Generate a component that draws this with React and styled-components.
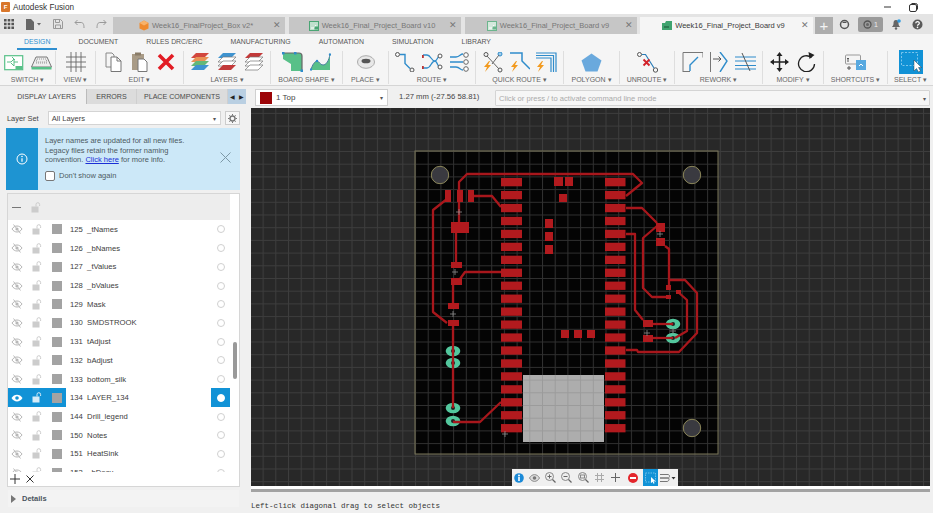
import React from "react";
import styled, { createGlobalStyle } from "styled-components";

const Global = createGlobalStyle`
  html, body { margin: 0; padding: 0; background: #f0f0f0; overflow: hidden; }
  * { box-sizing: border-box; }
  #root { width: 933px; height: 513px; }
`;
const FONT = `"Liberation Sans", Arial, sans-serif`;

const Page = styled.div`
  width: 933px; height: 513px; display: flex; flex-direction: column;
  font-family: ${FONT}; color: #444; background: #f0f0f0; overflow: hidden;
`;
const TitleBar = styled.div`
  height: 14px; background: #fff; display: flex; align-items: center;
  padding-left: 1px; font-size: 8.2px; color: #333; flex: none;
`;
const AppBadge = styled.span`
  width: 9px; height: 10px; background: #d9772b; color: #fff; font-size: 6px; font-weight: bold;
  display: flex; align-items: center; justify-content: center; margin-right: 3px; border-radius: 1px;
`;
const WinCtl = styled.div`
  margin-left: auto; display: flex; gap: 17px; align-items: center; padding-right: 15px;
`;
const TabBar = styled.div`
  height: 20px; background: #e4e4e4; display: flex; align-items: flex-end; flex: none; position: relative;
`;
const QuickTools = styled.div`
  width: 113px; height: 20px; display: flex; align-items: center; gap: 11px; padding-left: 4px; flex: none;
`;
const DocTab = styled.div`
  width: ${p => p.$w}px; height: 17px; margin-right: ${p => p.$mr ?? 4}px; flex: none;
  background: ${p => (p.$active ? "#f5f5f5" : "#c6c6c6")};
  color: ${p => (p.$active ? "#3a3a3a" : "#777")};
  font-size: 7.5px; display: flex; align-items: center; justify-content: center; gap: 3px; position: relative;
  padding-right: 6px;
`;
const TabClose = styled.span`
  position: absolute; right: 4px; top: 3px; font-size: 9px; color: #777; line-height: 10px;
`;
const PlusTab = styled.div`
  width: 18px; height: 17px; background: #adadad; color: #f3f3f3; font-size: 15px; margin-right: 6px;
  display: flex; align-items: center; justify-content: center; flex: none;
`;
const RightTools = styled.div`
  display: flex; align-items: center; height: 20px; gap: 8px;
`;
const JobPill = styled.div`
  width: 25px; height: 15px; background: #9b9b9b; border-radius: 2px; color: #eee; font-size: 7px;
  display: flex; align-items: center; justify-content: center; gap: 2px;
`;
const HelpSlot = styled.span`
  margin-left: 3px; line-height: 0;
`;
const RibbonTabs = styled.div`
  height: 16px; background: #f5f5f5; display: flex; gap: 28px; padding-left: 24px; font-size: 6.9px; color: #555; flex: none;
`;
const RibbonTab = styled.div`
  height: 15px; display: flex; align-items: center; position: relative; white-space: nowrap;
  color: ${p => (p.$active ? "#2f8fd0" : "#555")};
  ${p => p.$active && `&::after { content: ""; position: absolute; left: -7px; right: -7px; bottom: -1px; height: 2px; background: #2f8fd0; }`}
`;
const Ribbon = styled.div`
  height: 36px; background: #f5f5f5; display: flex; border-bottom: 1px solid #d5d5d5; flex: none;
`;
const Group = styled.div`
  width: ${p => p.$w}px; flex: none; height: 33px; margin-top: 1px; display: flex; flex-direction: column; align-items: center;
  justify-content: space-between; border-right: ${p => (p.$last ? "none" : "1px solid #dedede")};
`;
const GroupIcons = styled.div`
  display: flex; height: 22px; align-items: center; justify-content: center; gap: ${p => p.$gap ?? 6}px;
`;
const GroupLabel = styled.div`
  font-size: 7px; color: #666; line-height: 9px; white-space: nowrap;
`;
const SubBar = styled.div`
  height: 22px; display: flex; background: #f0f0f0; flex: none;
`;
const PanelTabs = styled.div`
  width: 251px; flex: none; display: flex; padding: 3px 0 0 7px; font-size: 7.1px; flex-shrink: 0;
`;
const PanelTab = styled.div`
  width: ${p => p.$w}px; height: 15px; display: flex; align-items: center; justify-content: center;
  background: ${p => (p.$active ? "#f0f0f0" : "#dcdcdc")}; color: #4a4a4a; white-space: nowrap;
  border-right: 1px solid ${p => (p.$active ? "#bbb" : "#cfcfcf")};
`;
const Arrows = styled.div`
  width: 18px; height: 15px; background: #b9cfe2; display: flex; align-items: center; justify-content: space-around; font-size: 6px; color: #222;
`;
const ComboBox = styled.div`
  margin: 3px 0 0 4px; width: 133px; height: 17px; background: #fff; border: 1px solid #d0d0d0;
  display: flex; align-items: center; padding: 0 4px; font-size: 8px; color: #444;
`;
const Swatch = styled.span`
  width: 12px; height: 12px; background: #9c0508; margin-right: 4px; flex: none;
`;
const Caret = styled.span`
  margin-left: auto; font-size: 6px; color: #555;
`;
const Coords = styled.div`
  width: 96px; margin-left: 11px; line-height: 22px; font-size: 7.7px; color: #444; white-space: nowrap; flex: none;
`;
const CommandBox = styled.div`
  margin-top: 4px; width: 435px; height: 16px; background: #f6f6f6; border: 1px solid #d4d4d4; border-radius: 1px;
  display: flex; align-items: center; padding: 0 3px; font-size: 7.6px; color: #aaa;
`;
const Main = styled.div`
  flex: 1; display: flex; min-height: 0;
`;
const Side = styled.div`
  width: 251px; flex: none; display: flex; flex-direction: column;
`;
const LayerSetRow = styled.div`
  height: 20px; display: flex; align-items: center; padding-left: 7px; font-size: 7.4px; flex: none;
`;
const SetSelect = styled.div`
  margin-left: 9px; width: 173px; height: 14px; background: #fff; border: 1px solid #d4d4d4;
  display: flex; align-items: center; padding: 0 4px 0 3px; font-size: 7.6px; color: #444;
`;
const GearBtn = styled.div`
  margin-left: 4px; width: 15px; height: 14px; background: #f7f7f7; border: 1px solid #ccc; display: flex; align-items: center; justify-content: center;
`;
const InfoBox = styled.div`
  margin-left: 6px; width: 234px; height: 62px; background: #cce8f8; display: flex; flex: none;
`;
const InfoSide = styled.div`
  width: 32px; background: #1e94d2; display: flex; align-items: center; justify-content: center; flex: none;
`;
const InfoBody = styled.div`
  flex: 1; padding: 8px 0 0 7px; font-size: 7.5px; line-height: 9.6px; color: #4d5a62; position: relative;
`;
const InfoLink = styled.a`
  color: #1b2fd6; text-decoration: underline;
`;
const CheckRow = styled.div`
  display: flex; align-items: center; gap: 4px; margin-top: 6px;
`;
const CheckBox = styled.span`
  width: 10px; height: 10px; background: #fff; border: 1px solid #777; border-radius: 2px; flex: none;
`;
const InfoClose = styled.div`
  position: absolute; right: 9px; top: 24px; line-height: 0;
`;
const List = styled.div`
  margin: 3px 0 0 7px; width: 233px; height: 294px; flex: none; background: #fff; border: 1px solid #d6d6d6;
  display: flex; flex-direction: column; position: relative;
`;
const ListBody = styled.div`
  flex: 1; min-height: 0; overflow: hidden;
`;
const ListHead = styled.div`
  height: 26px; width: 222px; background: #ededed; display: flex; align-items: center; padding-left: 3px; gap: 9px;
`;
const Dash = styled.span`
  width: 9px; height: 1px; background: #777; margin: 0 1px 0 1px;
`;
const Row = styled.div`
  height: 18.72px; width: 222px; display: flex; align-items: center; font-size: 7.7px; color: #3d3d3d;
`;
const RowIcons = styled.div`
  width: 58px; height: 100%; display: flex; align-items: center; padding-left: 3px; gap: 9px; flex: none;
  background: ${p => (p.$on ? "#1192d6" : "transparent")};
`;
const LayerChip = styled.span`
  width: 10px; height: 10px; background: #a3a3a3; flex: none; margin-left: 1px;
`;
const LayerName = styled.div`
  flex: 1; padding-left: 4px; white-space: pre;
`;
const RadioCell = styled.div`
  width: 19px; height: 100%; display: flex; align-items: center; justify-content: center; flex: none;
  background: ${p => (p.$on ? "#1192d6" : "transparent")};
`;
const Radio = styled.span`
  width: 8px; height: 8px; border-radius: 50%;
  background: ${p => (p.$on ? "#fff" : "transparent")};
  border: 1px solid ${p => (p.$on ? "#fff" : "#d0d0d0")};
`;
const ScrollThumb = styled.div`
  position: absolute; left: 225px; top: 148px; width: 4px; height: 37px; background: #999; border-radius: 2px;
`;
const ListFoot = styled.div`
  height: 14px; flex: none; display: flex; align-items: center; padding-left: 2px; gap: 6px; background: #fff;
`;
const Details = styled.div`
  margin: 3px 0 0 8px; width: 231px; height: 17px; background: #f3f3f3; display: flex; align-items: center; padding-left: 3px; gap: 6px;
  font-size: 7.5px; font-weight: bold; color: #4a5560;
`;
const Tri = styled.span`
  width: 0; height: 0; border-left: 5px solid #777; border-top: 4px solid transparent; border-bottom: 4px solid transparent;
`;
const Right = styled.div`
  width: 682px; flex: none; display: flex; flex-direction: column;
`;
const Canvas = styled.div`
  width: 679px; height: 378px; position: relative; background: #282828; line-height: 0; flex: none;
`;
const CanvasGap = styled.div`
  height: 3px; width: 679px; background: #fff; flex: none;
`;
const StatusRule = styled.div`
  height: 3px; width: 679px; background: #a3a3a3; flex: none;
`;
const Status = styled.div`
  padding: 9px 0 0 0; font-family: "Liberation Mono", monospace; font-size: 7.5px; line-height: 10px; color: #333; white-space: pre;
`;
const MiniBar = styled.div`
  position: absolute; left: 261px; top: 361px; width: 166px; height: 17px; background: #f0f0f0;
  display: flex; align-items: center;
`;
const MiniBtn = styled.div`
  width: ${p => p.$w ?? 16.3}px; height: 17px; display: flex; align-items: center; justify-content: center; flex: none;
  background: ${p => (p.$on ? "#1192d6" : "transparent")};
`;

/* ---------- icons ---------- */
const Ic = ({ w = 20, h = 20, vb, children }) => (
  <svg width={w} height={h} viewBox={vb || `0 0 ${w} ${h}`} fill="none">{children}</svg>
);
const G = "#58c088", B = "#2f8ccb";

const I = {
  apps: <Ic w={10} h={10}><path d="M0 0h2.6v2.6H0zM3.7 0h2.6v2.6H3.7zM7.4 0H10v2.6H7.4zM0 3.7h2.6v2.6H0zM3.7 3.7h2.6v2.6H3.7zM7.4 3.7H10v2.6H7.4zM0 7.4h2.6V10H0zM3.7 7.4h2.6V10H3.7zM7.4 7.4H10V10H7.4z" fill="#555" /></Ic>,
  file: <Ic w={17} h={11}><path d="M1 0h5l3 3v8H1z" fill="#666" /><path d="M12 4h4l-2 2.5z" fill="#666" /></Ic>,
  save: <Ic w={10} h={10}><path d="M.5.5h7l2 2v7h-9z" stroke="#999" /><path d="M2.5 1v2.5h4V1M2.5 9V6h5v3" stroke="#999" /></Ic>,
  undo: <Ic w={11} h={10}><path d="M3.5 1 1 3.5 3.5 6M1 3.5h6c2 0 3 1.500 3 5.500" stroke="#999" /></Ic>,
  redo: <Ic w={11} h={10}><path d="M7.500 1 10 3.500 7.500 6M10 3.500H4c-2 0-3 1.500-3 5.500" stroke="#999" /></Ic>,
  box: <Ic w={10} h={11}><path d="M5 .5 9.500 3v5.500L5 10.500.5 8.500V3z" fill="#ef8a2d" /><path d="M5 .5 9.500 3 5 5.500.5 3z" fill="#f7b26a" /></Ic>,
  pcb: (c1, c2) => <Ic w={10} h={10}><rect x=".5" y=".5" width="9" height="9" fill={c2} stroke={c1} /><path d="M2 7h3l2-3M6 7h2" stroke="#fff" /><rect x="5.500" y="5.500" width="3.500" height="3" fill={c1} /></Ic>,
  pcbDark: <Ic w={10} h={9}><path d="M0 2h3l1-2h6v9H0z" fill="#3fa36f" /><rect x="2" y="5" width="5" height="2" fill="#2b7a52" /></Ic>,
  globe: <Ic w={11} h={11}><circle cx="5.500" cy="5.500" r="4" stroke="#555" strokeWidth="1.500" /><path d="M3 4a3 3 0 0 1 5 0z" fill="#555" /></Ic>,
  job: <Ic w={9} h={9}><circle cx="4.500" cy="4.500" r="3.500" stroke="#555" strokeWidth="1.300" /><circle cx="4.500" cy="4.500" r="1.500" fill="#666" /></Ic>,
  bell: <Ic w={10} h={11}><path d="M5 1c2 0 2.500 1.500 2.500 3.500 0 2 1 2.500 1.500 3.500H1c.5-1 1.500-1.500 1.500-3.500S3 1 5 1z" fill="#666" /><circle cx="5" cy="9.500" r="1.200" fill="#666" /><circle cx="8" cy="2" r="1.800" fill="#2f9be0" /></Ic>,
  help: <Ic w={11} h={11}><circle cx="5.500" cy="5.500" r="5" fill="#5a5a5a" /><path d="M3.700 4.200c.2-2 3.600-2 3.600 0 0 1.300-1.800 1.300-1.800 2.500" stroke="#fff" strokeWidth="1.200" /><circle cx="5.500" cy="8.400" r=".8" fill="#fff" /></Ic>,
  min: <Ic w={10} h={10}><path d="M2 5h7" stroke="#333" /></Ic>,
  restore: <Ic w={9} h={9}><rect x=".5" y="1.500" width="7" height="7" rx="1.500" stroke="#333" /><path d="M2.500 .5h4a2 2 0 0 1 2 2v4" stroke="#333" /></Ic>,

  schem: <Ic w={20} h={17}><rect x=".7" y="1.700" width="18" height="14" stroke={G} strokeWidth="1.200" fill="#fff" /><path d="M3 8h4l3-3v7l-3-3M10 8h4M8 3l3 3" stroke={G} /><rect x="11.500" y="12" width="7" height="3.500" fill={G} /></Ic>,
  pcb3d: <Ic w={21} h={15}><path d="M5 2h11l4.500 10H.5z" fill="#eee" stroke="#777" /><path d="M6 4h9l1 3H5zM5 8h11" stroke="#999" strokeDasharray="1 1" /><path d="M.5 12h20v2.500H.5z" fill={G} /></Ic>,
  grid: <Ic w={20} h={20}><path d="M5 0v20M10 0v20M15 0v20M0 5h20M0 10h20M0 15h20" stroke="#666" strokeWidth=".9" /></Ic>,
  copy: <Ic w={17} h={20}><path d="M1 1h6l2 2v12H1z" stroke="#888" fill="#f5f5f5" /><path d="M6 5h6l4 4v10.500H6z" stroke="#777" fill="#fff" /><path d="M12 5v4h4" stroke="#777" /></Ic>,
  paste: <Ic w={17} h={20}><rect x="1" y="2" width="12" height="16" fill="#a99b86" /><rect x="4" y=".5" width="6" height="3" fill="#8a7c68" /><path d="M7 7h6l3 3v9.500H7z" stroke="#777" fill="#fff" /></Ic>,
  cross: <Ic w={18} h={18}><path d="M2 2l14 14M16 2 2 16" stroke="#e21c24" strokeWidth="3.600" /></Ic>,
  layers: cols => <Ic w={18} h={20}>{cols.map((c, i) => <path key={i} d={`M5 ${1 + i * 4}h13l-5 5H0z`} fill={c} stroke={c === "#fff" ? "#777" : "none"} strokeWidth=".7" />)}</Ic>,
  shape: <Ic w={21} h={20}><path d="M1 1h16a3 3 0 0 1 3 3v15H9V12L1 7z" fill={G} /><path d="M1 1h16a3 3 0 0 1 3 3v15" stroke="#666" strokeWidth="1.200" /><rect x="0" y="0" width="2.500" height="2.500" fill={B} /><rect x="12" y="0" width="2.500" height="2.500" fill={B} /><rect x="18.500" y="17.500" width="2.500" height="2.500" fill={B} /></Ic>,
  curve: <Ic w={21} h={18}><path d="M1 17c1-5 4-9 6-9s3 4 6 4 6-4 7-11v16z" fill={G} /><path d="M1 17c1-5 4-9 6-9s3 4 6 4 6-4 7-11" stroke="#4a7f9f" /><circle cx="7" cy="8" r="1.200" fill={B} /><circle cx="20" cy="1.500" r="1.200" fill={B} /><circle cx="1" cy="16.500" r="1.200" fill={B} /></Ic>,
  ring: <Ic w={18} h={14}><ellipse cx="9" cy="7" rx="8.500" ry="6.300" fill="#e8e8e8" stroke="#aaa" /><ellipse cx="9" cy="6" rx="4.500" ry="2.300" fill="#555" /></Ic>,
  route: <Ic w={20} h={20}><circle cx="2.500" cy="2.500" r="2" stroke="#555" /><path d="M5 2.500h5v9l5 5" stroke={B} strokeWidth="1.400" /><circle cx="17" cy="18" r="2" stroke="#555" /></Ic>,
  fan: <Ic w={21} h={20}><path d="M1 3h4c4 0 4 6 8 6 2 0 3-5 5-6M1 16h4c4 0 4-7 8-7 2 0 3 6 5 7" stroke={B} strokeWidth="1.300" /><circle cx="18" cy="4" r="2" fill="#fff" stroke="#555" /><circle cx="18" cy="15" r="2" fill="#fff" stroke="#555" /><rect y="3" width="1.800" height="3" fill="#b33" /><rect y="14" width="1.800" height="3" fill="#b33" /></Ic>,
  bus: <Ic w={20} h={20}><path d="M0 5h6c4 0 4-3 7-3M0 10h13M0 15h6c4 0 4 3 7 3" stroke={B} strokeWidth="1.300" /><circle cx="16" cy="3" r="2.300" fill="#fff" stroke="#666" /><circle cx="16" cy="10" r="2.300" fill="#fff" stroke="#666" /><circle cx="16" cy="17" r="2.300" fill="#fff" stroke="#666" /></Ic>,
  qAir: <Ic w={21} h={21}><circle cx="3" cy="2.500" r="2" stroke="#555" /><circle cx="17" cy="2" r="2" fill="#9fcdec" stroke={B} /><circle cx="17" cy="18" r="2" stroke="#555" /><path d="M4 4l12 13M16 3l-7 9" stroke="#666" /><path d="M6 9 1 15h3l-2 5 6-7H5l2-4z" fill="#f29a1f" /></Ic>,
  qRoute: <Ic w={20} h={21}><path d="M0 1h12v8l8 8" stroke={B} strokeWidth="1.500" /><path d="M6 9 1 15h3l-2 5 6-7H5l2-4z" fill="#f29a1f" /></Ic>,
  qBus: <Ic w={21} h={21}><path d="M0 1h20v19M0 3.500h17.500V20M0 6h15v14" stroke={B} strokeWidth="1.200" /><path d="M6 9 1 15h3l-2 5 6-7H5l2-4z" fill="#f29a1f" /></Ic>,
  pent: <Ic w={21} h={19}><path d="M10.500.5 20.500 7.500 16.500 18.500h-12L.5 7.500z" fill="#6aa9dd" /></Ic>,
  unroute: <Ic w={21} h={21}><circle cx="2.500" cy="2.500" r="2" stroke="#555" /><circle cx="18.500" cy="18" r="2.200" stroke="#555" /><path d="M5 2.500h3.500L17 16" stroke="#2b7db8" strokeWidth="1.200" /><path d="M6.500 7.500l6 6M12.500 7.500l-6 6" stroke="#d2222a" strokeWidth="1.900" /></Ic>,
  rework1: <Ic w={21} h={20}><path d="M1 20V.5h20v5" stroke="#777" /><path d="M8 19v-6l8-8" stroke={B} strokeWidth="1.400" /><path d="M1 19.500h7" stroke="#777" /></Ic>,
  rework2: <Ic w={18} h={20}><path d="M.5 0v20" stroke="#777" /><path d="M3 7h8M8.500 4.500 11 7 8.500 9.500" stroke="#555" /><path d="M10 0l7 9-7 11" stroke={B} strokeWidth="1.400" /></Ic>,
  rework3: <Ic w={21} h={20}><path d="M0 5h21M0 9h21M0 13.500h21M0 17h21" stroke={B} strokeWidth="1.200" /><path d="M7 1l8 18" stroke="#555" /></Ic>,
  move: <Ic w={19} h={20}><path d="M9.500 2v16M1.500 10h16" stroke="#222" strokeWidth="1.500" /><path d="M9.500 0l3 4h-6zM9.500 20l3-4h-6zM0 10l4-3v6zM19 10l-4-3v6z" fill="#222" /></Ic>,
  rotate: <Ic w={19} h={20}><path d="M14.500 5.500A8 8 0 1 0 17.500 12" stroke="#222" strokeWidth="1.300" /><path d="M11.500 0l6 3-5 4z" fill="#222" /></Ic>,
  shortcuts: <Ic w={21} h={19}><rect x=".5" y="2" width="15" height="9" rx="1" fill="#f4f4f4" stroke="#999" /><path d="M3 5v4M2 6l1-1 1 1M2 15h4M4 13v4" stroke="#555" /><rect x="11" y="7" width="10" height="10" fill="#58a9e0" /><path d="M14 13l2-2 2 2" stroke="#fff" /></Ic>,
  select: <Ic w={24} h={24}><rect width="24" height="24" fill="#1192d6" /><rect x="2.500" y="2.500" width="16" height="13" stroke="#7cc5ec" strokeDasharray="2 1.500" /><path d="M15 10v11l2.500-2.500 2 3.500 2-1-2-3.500h3z" fill="#fff" stroke="#222" strokeWidth=".4" /></Ic>,

  eyeOff: <Ic w={12} h={10}><path d="M1 5c2.500-4 7.500-4 10 0-2.500 4-7.500 4-10 0z" stroke="#b5b5b5" /><circle cx="6" cy="5" r="1.600" fill="#b5b5b5" /><path d="M2.500 .5 9.500 9.500" stroke="#bbb" /></Ic>,
  eyeOn: <Ic w={12} h={10}><path d="M.5 5c2.500-4.500 8.500-4.500 11 0-2.500 4.500-8.500 4.500-11 0z" fill="#fff" /><circle cx="6" cy="5" r="1.800" fill="#1192d6" /></Ic>,
  lock: c => <Ic w={10} h={11}><rect x=".5" y="4.500" width="7" height="6" fill={c} /><path d="M5 4.500V2.500a1.800 1.800 0 0 1 3.600 0V4" stroke={c} /></Ic>,
  gear: <Ic w={9} h={9}><circle cx="4.500" cy="4.500" r="2.500" stroke="#777" strokeWidth="1.400" /><path d="M4.500 0v1.500M4.500 7.500V9M0 4.500h1.500M7.500 4.500H9M1.300 1.300l1 1M6.700 6.700l1 1M7.700 1.300l-1 1M2.300 6.700l-1 1" stroke="#777" /></Ic>,
  info: <Ic w={12} h={12}><circle cx="6" cy="6" r="5" stroke="#fff" /><path d="M6 5.300v3.500" stroke="#fff" strokeWidth="1.200" /><circle cx="6" cy="3.500" r=".8" fill="#fff" /></Ic>,
  closeBig: <Ic w={11} h={11}><path d="M.5.5l10 10M10.500.5l-10 10" stroke="#7d98a6" /></Ic>,
  add: <Ic w={10} h={10}><path d="M5 0v10M0 5h10" stroke="#333" /></Ic>,
  del: <Ic w={8} h={8}><path d="M.5.5l7 7M7.500.5l-7 7" stroke="#333" /></Ic>,

  mInfo: <Ic w={10} h={10}><circle cx="5" cy="5" r="4.800" fill="#1b8ad8" /><rect x="4.200" y="4" width="1.600" height="4" fill="#fff" /><circle cx="5" cy="2.600" r="1" fill="#fff" /></Ic>,
  mEye: <Ic w={11} h={8}><path d="M.5 4c2.500-4.500 7.500-4.500 10 0-2.500 4.500-7.500 4.500-10 0z" fill="#ddd" stroke="#888" /><circle cx="5.500" cy="4" r="1.800" fill="#777" /></Ic>,
  mZoom: s => <Ic w={11} h={11}><circle cx="4.500" cy="4.500" r="4" stroke="#888" fill="#eee" /><path d="M7.500 7.500 10.500 10.500" stroke="#666" strokeWidth="1.300" />{s !== "fit" && <path d="M2.500 4.500h4" stroke="#666" />}{s === "+" && <path d="M4.500 2.500v4" stroke="#666" />}{s === "fit" && <rect x="2.500" y="3" width="4" height="3" stroke="#888" />}</Ic>,
  mGrid: <Ic w={9} h={9}><path d="M2.500 0v9M6.500 0v9M0 2.500h9M0 6.500h9" stroke="#aaa" /></Ic>,
  mPlus: <Ic w={9} h={9}><path d="M4.500 0v9M0 4.500h9" stroke="#666" /></Ic>,
  mStop: <Ic w={10} h={10}><circle cx="5" cy="5" r="5" fill="#e4262c" /><rect x="2" y="4" width="6" height="2" fill="#fff" /></Ic>,
  mSel: <Ic w={15} h={17}><rect x="2.500" y="4" width="10" height="9" stroke="#6fc0ea" strokeDasharray="1.500 1" /><path d="M8 8v6l1.500-1.200 1 2 1-.5-1-2h2z" fill="#fff" /></Ic>,
  mRoute: <Ic w={17} h={10}><path d="M1 1.500h8c2 0 2 3.500 0 3.500H1M1 5h8c2 0 1 3.500-1 3.500H1" stroke="#777" /><path d="M12.500 4h4l-2 2.500z" fill="#333" /></Ic>
};

/* ---------- canvas ---------- */
const RED = "#a8171c";
const TRACES = [
  "459,195 459,182 467,174 633,174 642,183 626,196",
  "470,196 492,196 501,207",
  "447,199 433,210 433,312 447,323",
  "459,200 459,222",
  "456,233 456,262",
  "460,279 465,272 501,272",
  "453,285 453,303",
  "453,322 453,351 453,408",
  "453,422 480,422 501,402",
  "626,208 642,208 657,223",
  "665,246 669,249 669,287",
  "657,226 643,238 643,288 652,297 667,297",
  "626,234 635,234 635,310 643,320",
  "650,324 673,324",
  "650,338 673,338",
  "670,280 685,280 697,293 697,333 679,352 638,352 637,350 626,350",
  "678,292 687,300 687,331 675,338"
];
const PADS = [
  [445, 190, 6, 12], [457, 190, 6, 12], [468, 190, 6, 12],
  [451, 222, 18, 11], [451, 262, 11, 6], [451, 278, 11, 7], [448, 303, 11, 6], [448, 320, 11, 6],
  [554, 177, 9, 9], [565, 177, 8, 9], [559, 194, 8, 8],
  [545, 219, 8, 9], [545, 232, 8, 9], [545, 245, 8, 9],
  [561, 330, 8, 8], [574, 330, 8, 8], [587, 330, 8, 8],
  [656, 223, 9, 9], [656, 238, 9, 8], [666, 285, 5, 5], [666, 295, 5, 4], [676, 290, 5, 4],
  [643, 320, 10, 7], [643, 335, 10, 7]
];
const VIAS = [[453, 351], [453, 363], [453, 408], [453, 421], [673, 324], [673, 338]];
const HOLES = [[440, 175], [692, 175], [692, 428]];
const CROSSES = [[455, 272], [453, 314], [505, 434], [647, 333], [660, 234], [673, 331], [459, 212]];
const COLUMN_Y = Array.from({ length: 20 }, (_, i) => 178 + i * 12.95);

const Board = () => (
  <svg width="679" height="378" viewBox="251 108 679 378">
    <defs>
      <pattern id="gridOut" x="415" y="151" width="12.7" height="12.7" patternUnits="userSpaceOnUse">
        <path d="M0 .5H12.700M.5 0V12.700" stroke="#3d3d3d" strokeWidth="1" />
      </pattern>
      <pattern id="gridIn" x="415" y="151" width="12.7" height="12.7" patternUnits="userSpaceOnUse">
        <path d="M0 .5H12.700M.5 0V12.700" stroke="#303030" strokeWidth="1" />
      </pattern>
      <pattern id="gridChip" x="415" y="151" width="12.7" height="12.7" patternUnits="userSpaceOnUse">
        <path d="M0 .5H12.700M.5 0V12.700" stroke="#9b9b9b" strokeWidth="1" />
      </pattern>
    </defs>
    <rect x="251" y="108" width="679" height="378" fill="#282828" />
    <rect x="251" y="108" width="679" height="378" fill="url(#gridOut)" />
    <rect x="415" y="151" width="303" height="303" fill="#040404" />
    <rect x="415" y="151" width="303" height="303" fill="url(#gridIn)" />
    <rect x="415" y="151" width="303" height="303" fill="none" stroke="#7a7658" strokeWidth="1" />
    {HOLES.map(([x, y]) => (
      <circle key={x + "-" + y} cx={x} cy={y} r="8.700" fill="#3a3a40" stroke="#8b8659" strokeWidth="1" />
    ))}
    <rect x="523" y="375" width="81" height="67" fill="#adadad" />
    <rect x="523" y="375" width="81" height="67" fill="url(#gridChip)" />
    {VIAS.map(([x, y]) => (
      <g key={x + "-" + y}>
        <ellipse cx={x} cy={y} rx="7.300" ry="5.300" fill="#53c79d" />
        <circle cx={x} cy={y} r="2" fill="#222" />
      </g>
    ))}
    {TRACES.map(t => (
      <polyline key={t} points={t} fill="none" stroke={RED} strokeWidth="2.300" strokeLinejoin="round" />
    ))}
    {COLUMN_Y.flatMap(y => [
      <rect key={"l" + y} x="501" y={y} width="21" height="8.300" fill="#b21a1e" />,
      <rect key={"r" + y} x="605" y={y} width="20.500" height="8.300" fill="#b21a1e" />
    ])}
    {PADS.map(([x, y, w, h]) => (
      <rect key={x + "-" + y} x={x} y={y} width={w} height={h} fill="#b21a1e" />
    ))}
    {CROSSES.map(([x, y]) => (
      <path key={x + "-" + y} d={`M${x - 3} ${y}h6M${x} ${y - 3}v6`} stroke="#8d8d8d" strokeWidth=".8" />
    ))}
  </svg>
);

const ROWS = [
  ["125", "_tNames"], ["126", "_bNames"], ["127", "_tValues"], ["128", "_bValues"], ["129", "Mask"],
  ["130", "SMDSTROOK"], ["131", "tAdjust"], ["132", "bAdjust"], ["133", "bottom_silk"], ["134", "LAYER_134", true],
  ["144", "Drill_legend"], ["150", "Notes"], ["151", "HeatSink"], ["153", "_bDocu"]
];

const GROUPS = [
  { w: 56, label: "SWITCH", gap: 7, icons: [I.schem, I.pcb3d] },
  { w: 40, label: "VIEW", icons: [I.grid] },
  { w: 88, label: "EDIT", gap: 9, icons: [I.copy, I.paste, I.cross] },
  { w: 87, label: "LAYERS", gap: 9, icons: [I.layers(["#d2473e", "#e89255", "#64b878", "#3f93cf"]), I.layers(["#3f93cf", "#fff", "#fff", "#c23a3a"]), I.layers(["#c23a3a", "#fff", "#fff", "#fff"])] },
  { w: 72, label: "BOARD SHAPE", gap: 7, icons: [I.shape, I.curve] },
  { w: 46, label: "PLACE", icons: [I.ring] },
  { w: 87, label: "ROUTE", gap: 7, icons: [I.route, I.fan, I.bus] },
  { w: 88, label: "QUICK ROUTE", gap: 6, icons: [I.qAir, I.qRoute, I.qBus] },
  { w: 56, label: "POLYGON", icons: [I.pent] },
  { w: 55, label: "UNROUTE", icons: [I.unroute] },
  { w: 88, label: "REWORK", gap: 7, icons: [I.rework1, I.rework2, I.rework3] },
  { w: 61, label: "MODIFY", gap: 8, icons: [I.move, I.rotate] },
  { w: 64, label: "SHORTCUTS", icons: [I.shortcuts] },
  { w: 45, label: "SELECT", last: true, icons: [I.select] }
];

export default function App() {
  return (
    <Page>
      <Global />
      <TitleBar>
        <AppBadge>F</AppBadge>
        Autodesk Fusion
        <WinCtl>{I.min}{I.restore}</WinCtl>
      </TitleBar>
      <TabBar>
        <QuickTools>{I.apps}{I.file}{I.save}{I.undo}{I.redo}</QuickTools>
        <DocTab $w={172}>{I.box}<span>Week16_FinalProject_Box v2*</span><TabClose>✕</TabClose></DocTab>
        <DocTab $w={172}>{I.pcb("#4aa574", "#bfe0cd")}<span>Week16_Final_Project_Board v10</span><TabClose>✕</TabClose></DocTab>
        <DocTab $w={172} $mr={3}>{I.pcb("#6cb58d", "#d4e8dc")}<span>Week16_Final_Project_Board v9</span><TabClose>✕</TabClose></DocTab>
        <DocTab $w={173} $active $mr={2}>{I.pcbDark}<span>Week16_Final_Project_Board v9</span><TabClose>✕</TabClose></DocTab>
        <PlusTab>+</PlusTab>
        <RightTools>
          {I.globe}
          <JobPill>{I.job}1</JobPill>
          {I.bell}
          <HelpSlot>{I.help}</HelpSlot>
        </RightTools>
      </TabBar>
      <RibbonTabs>
        <RibbonTab $active>DESIGN</RibbonTab>
        <RibbonTab>DOCUMENT</RibbonTab>
        <RibbonTab>RULES DRC/ERC</RibbonTab>
        <RibbonTab>MANUFACTURING</RibbonTab>
        <RibbonTab>AUTOMATION</RibbonTab>
        <RibbonTab>SIMULATION</RibbonTab>
        <RibbonTab>LIBRARY</RibbonTab>
      </RibbonTabs>
      <Ribbon>
        {GROUPS.map(g => (
          <Group key={g.label} $w={g.w} $last={g.last}>
            <GroupIcons $gap={g.gap}>
              {g.icons.map((ic, i) => <React.Fragment key={i}>{ic}</React.Fragment>)}
            </GroupIcons>
            <GroupLabel>{g.label} ▾</GroupLabel>
          </Group>
        ))}
      </Ribbon>
      <SubBar>
        <PanelTabs>
          <PanelTab $w={80} $active>DISPLAY LAYERS</PanelTab>
          <PanelTab $w={50}>ERRORS</PanelTab>
          <PanelTab $w={91}>PLACE COMPONENTS</PanelTab>
          <Arrows><span>◀</span><span>▶</span></Arrows>
        </PanelTabs>
        <ComboBox><Swatch />1 Top<Caret>▾</Caret></ComboBox>
        <Coords>1.27 mm (-27.56 58.81)</Coords>
        <CommandBox>Click or press / to activate command line mode<Caret>▾</Caret></CommandBox>
      </SubBar>
      <Main>
        <Side>
          <LayerSetRow>
            Layer Set
            <SetSelect>All Layers<Caret>▾</Caret></SetSelect>
            <GearBtn>{I.gear}</GearBtn>
          </LayerSetRow>
          <InfoBox>
            <InfoSide>{I.info}</InfoSide>
            <InfoBody>
              Layer names are updated for all new files.<br />
              Legacy files retain the former naming<br />
              convention. <InfoLink>Click here</InfoLink> for more info.
              <CheckRow><CheckBox />Don't show again</CheckRow>
              <InfoClose>{I.closeBig}</InfoClose>
            </InfoBody>
          </InfoBox>
          <List>
            <ListBody>
              <ListHead><Dash />{I.lock("#ccc")}</ListHead>
              {ROWS.map(([n, name, on]) => (
                <Row key={n}>
                  <RowIcons $on={on}>
                    {on ? I.eyeOn : I.eyeOff}
                    {I.lock(on ? "#d6ecf8" : "#ccc")}
                    <LayerChip />
                  </RowIcons>
                  <LayerName>{n}  {name}</LayerName>
                  <RadioCell $on={on}><Radio $on={on} /></RadioCell>
                </Row>
              ))}
            </ListBody>
            <ScrollThumb />
            <ListFoot>{I.add}{I.del}</ListFoot>
          </List>
          <Details><Tri />Details</Details>
        </Side>
        <Right>
          <Canvas>
            <Board />
            <MiniBar>
              <MiniBtn $w={14}>{I.mInfo}</MiniBtn>
              <MiniBtn>{I.mEye}</MiniBtn>
              <MiniBtn>{I.mZoom("+")}</MiniBtn>
              <MiniBtn>{I.mZoom("-")}</MiniBtn>
              <MiniBtn>{I.mZoom("fit")}</MiniBtn>
              <MiniBtn>{I.mGrid}</MiniBtn>
              <MiniBtn>{I.mPlus}</MiniBtn>
              <MiniBtn $w={19}>{I.mStop}</MiniBtn>
              <MiniBtn $w={15} $on>{I.mSel}</MiniBtn>
              <MiniBtn $w={20}>{I.mRoute}</MiniBtn>
            </MiniBar>
          </Canvas>
          <CanvasGap />
          <StatusRule />
          <Status>Left-click diagonal drag to select objects</Status>
        </Right>
      </Main>
    </Page>
  );
}
